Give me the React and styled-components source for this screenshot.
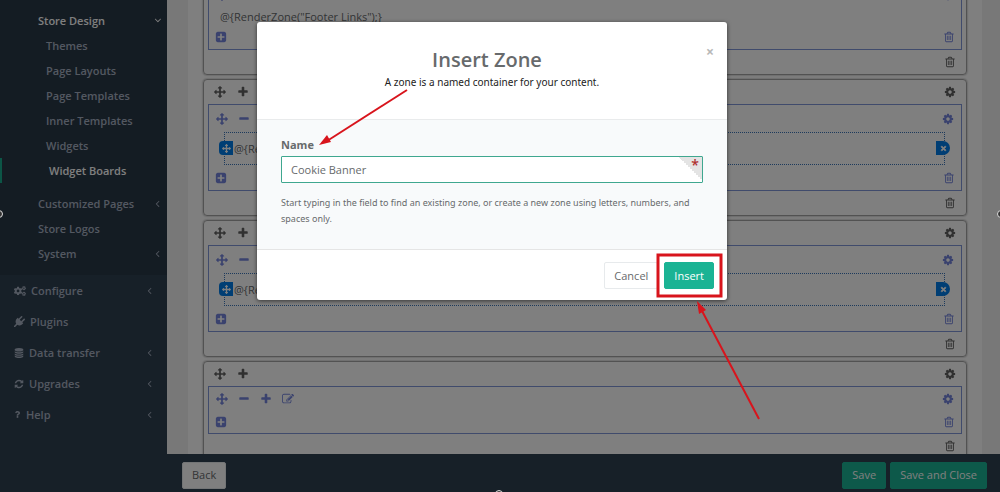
import React from 'react';
import styled, { createGlobalStyle, css } from 'styled-components';
import { FaCogs, FaQuestion, FaTimes } from 'react-icons/fa';

const GlobalStyle = createGlobalStyle`
  *, *::before, *::after {
    box-sizing: border-box;
  }

  body {
    margin: 0;
    background: #2f4050;
    font-family: 'Open Sans', 'Noto Sans', sans-serif;
    font-size: 11px;
    color: #676a6c;
  }

  button, input {
    font: inherit;
    margin: 0;
  }
`;

const Page = styled.div`
  position: relative;
  display: grid;
  grid-template-columns: 167px 1fr;
  grid-template-rows: minmax(0, 1fr) 38px;
  height: 100vh;
  overflow: hidden;
`;

/* ---------- sidebar ---------- */

const Sidebar = styled.nav`
  grid-row: 1 / 3;
  background: #2f4050;
  overflow: hidden;
`;

const MenuList = styled.ul`
  list-style: none;
  margin: 0;
  padding: 0;
`;

const OpenSection = styled(MenuList)`
  background: #293846;
  padding: 8px 0 9px;
`;

const SubList = styled(MenuList)`
  padding-bottom: 8px;
`;

const MenuLink = styled.a`
  display: flex;
  align-items: center;
  height: ${p => (p.$top ? 31 : 25)}px;
  padding: 0 ${p => (p.$top ? 12 : 4)}px 0 ${p => p.$indent}px;
  gap: 5px;
  color: ${p => (p.$active ? '#ffffff' : '#a7b1c2')};
  font-weight: 600;
  text-decoration: none;
  white-space: nowrap;
  ${p => p.$current && css`
    border-left: 2px solid #19aa8d;
  `}

  svg:last-child:not(:first-child) {
    margin-left: auto;
  }
`;

/* ---------- board ---------- */

const Main = styled.main`
  background: #f0f0f1;
  padding: 0 18px 0 21px;
  overflow: hidden;
`;

const Pane = styled.div`
  display: flex;
  flex-direction: column;
  gap: 4px;
  min-height: 100%;
  margin-top: -45px;
  padding: 0 15px;
  background: #ffffff;
`;

const Panel = styled.section`
  border: 1px solid #a4a4a4;
  border-radius: 4px;
  padding: 0 4px;
  box-shadow: 0 0 2px #888888;
`;

const Bar = styled.div`
  display: flex;
  align-items: center;
  height: ${p => p.$height}px;
  gap: ${p => p.$gap || 10}px;
  padding: 0 ${p => p.$pad}px;
`;

const Spacer = styled.span`
  flex: 1;
`;

const WidgetBox = styled.div`
  border: 1px solid #8096d8;
`;

const IconButton = styled.button`
  display: flex;
  border: 0;
  padding: 0;
  background: none;
  color: ${p => (p.$blue ? '#7484dc' : '#606060')};
  cursor: pointer;
`;

const ZoneText = styled.div`
  height: 16px;
  padding-left: 11px;
  line-height: 18px;
`;

const Zone = styled.div`
  position: relative;
  display: flex;
  align-items: center;
  height: 33px;
  margin: 0 16px 0 15px;
  padding-left: 9px;
  border: 1px dotted #3a74b8;
`;

const ZoneHandle = styled.button`
  position: absolute;
  top: 8px;
  ${p => (p.$side === 'left' ? 'left: -6px;' : 'right: -6px;')}
  display: flex;
  align-items: center;
  justify-content: center;
  width: 14px;
  height: 14px;
  padding: 0;
  border: 0;
  border-radius: ${p => (p.$side === 'left' ? '4px 0 0 4px' : '0 7px 7px 0')};
  background: #007ce8;
  color: #ffffff;
`;

const ActionBar = styled.footer`
  display: flex;
  align-items: center;
  gap: 4px;
  padding: 5px 13px 1px 15px;
  background: #2f4050;
`;

const Button = styled.button`
  height: 27px;
  padding: 0 9px;
  border: 1px solid ${p => (p.$primary ? '#1ab394' : '#e7eaec')};
  border-radius: 2px;
  background: ${p => (p.$primary ? '#1ab394' : '#ffffff')};
  color: ${p => (p.$primary ? '#ffffff' : '#676a6c')};
  line-height: 16px;
  cursor: pointer;
`;

/* ---------- dialog ---------- */

const Backdrop = styled.div`
  position: absolute;
  inset: 0;
  display: flex;
  align-items: flex-start;
  justify-content: center;
  padding: 22px 16px 0 0;
  background: rgba(0, 0, 0, 0.5);
`;

const Dialog = styled.div`
  position: relative;
  width: 470px;
  max-width: 100%;
  border-radius: 3px;
  background: #ffffff;
  box-shadow: 0 1px 4px rgba(0, 0, 0, 0.6);
`;

const DialogHeader = styled.header`
  padding: 25px 24px 28px;
  border-bottom: 1px solid #e9ebec;
  text-align: center;
`;

const Title = styled.h1`
  margin: 0;
  padding-right: 10px;
  font-size: 20px;
  line-height: 26px;
  font-weight: 600;
`;

const Subtitle = styled.p`
  margin: 0;
  color: #222222;
  font-family: 'Noto Sans', sans-serif;
  font-size: 10px;
  line-height: 18px;
`;

const CloseButton = styled.button`
  position: absolute;
  top: 22px;
  right: 13px;
  padding: 0;
  border: 0;
  background: none;
  color: #b8b8b8;
  font-size: 14px;
  font-weight: 700;
  line-height: 16px;
`;

const DialogBody = styled.div`
  padding: 16px 24px 22px;
  background: #f8fafb;
`;

const Label = styled.label`
  display: block;
  margin-bottom: 2px;
  font-weight: 700;
  line-height: 18px;
`;

const Field = styled.div`
  position: relative;
`;

const Input = styled.input`
  display: block;
  width: 100%;
  height: 27px;
  padding: 0 30px 0 9px;
  border: 1px solid #3fa78f;
  border-radius: 1px;
  outline: 0;
  background: #ffffff;
  color: #676a6c;
`;

const Required = styled.span`
  position: absolute;
  top: 1px;
  right: 1px;
  width: 23px;
  height: 23px;
  padding-right: 3px;
  background: linear-gradient(to top right, transparent 50%, #e4e4e4 50%);
  color: #b03030;
  font-size: 14px;
  font-weight: 600;
  line-height: 16px;
  text-align: right;
`;

const Help = styled.p`
  margin: 12px 0 0;
  font-family: 'Noto Sans', sans-serif;
  font-size: 9px;
  line-height: 16px;
`;

const DialogFooter = styled.footer`
  display: flex;
  justify-content: flex-end;
  gap: 6px;
  padding: 12px 13px 11px;
  border-top: 1px solid #e5e5e5;
`;

const Annotations = styled.svg`
  position: absolute;
  top: 0;
  left: 0;
  overflow: visible;
  pointer-events: none;
`;

const Grip = styled.span`
  position: absolute;
  width: 8px;
  height: 8px;
  border: 1px solid #dddddd;
  border-radius: 50%;
  background: #333333;
  ${p => p.$at === 'left' && 'left: -5px; top: 210px;'}
  ${p => p.$at === 'right' && 'right: -5px; top: 210px;'}
  ${p => p.$at === 'bottom' && 'left: calc(50% - 5px); bottom: -6px;'}
`;

/* ---------- icons ---------- */

const paths = {
  move: 'M1792 896q0 26-19 45l-256 256q-19 19-45 19t-45-19-19-45v-128h-384v384h128q26 0 45 19t19 45-19 45l-256 256q-19 19-45 19t-45-19l-256-256q-19-19-19-45t19-45 45-19h128v-384h-384v128q0 26-19 45t-45 19-45-19l-256-256q-19-19-19-45t19-45l256-256q19-19 45-19t45 19 19 45v128h384v-384h-128q-26 0-45-19t-19-45 19-45l256-256q19-19 45-19t45 19l256 256q19 19 19 45t-19 45-45 19h-128v384h384v-128q0-26 19-45t45-19 45 19l256 256q19 19 19 45z',
  plus: 'M1600 736v192q0 40-28 68t-68 28h-416v416q0 40-28 68t-68 28h-192q-40 0-68-28t-28-68v-416h-416q-40 0-68-28t-28-68v-192q0-40 28-68t68-28h416v-416q0-40 28-68t68-28h192q40 0 68 28t28 68v416h416q40 0 68 28t28 68z',
  minus: 'M1600 736v192q0 40-28 68t-68 28h-1216q-40 0-68-28t-28-68v-192q0-40 28-68t68-28h1216q40 0 68 28t28 68z',
  plusSquare: 'M1408 960v-128q0-26-19-45t-45-19h-320v-320q0-26-19-45t-45-19h-128q-26 0-45 19t-19 45v320h-320q-26 0-45 19t-19 45v128q0 26 19 45t45 19h320v320q0 26 19 45t45 19h128q26 0 45-19t19-45v-320h320q26 0 45-19t19-45zm256-544v960q0 119-84.5 203.5t-203.5 84.5h-960q-119 0-203.5-84.5t-84.5-203.5v-960q0-119 84.5-203.5t203.5-84.5h960q119 0 203.5 84.5t84.5 203.5z',
  trash: 'M704 736v576q0 14-9 23t-23 9h-64q-14 0-23-9t-9-23v-576q0-14 9-23t23-9h64q14 0 23 9t9 23zm256 0v576q0 14-9 23t-23 9h-64q-14 0-23-9t-9-23v-576q0-14 9-23t23-9h64q14 0 23 9t9 23zm256 0v576q0 14-9 23t-23 9h-64q-14 0-23-9t-9-23v-576q0-14 9-23t23-9h64q14 0 23 9t9 23zm128 724v-948h-896v948q0 22 7 40.5t14.5 27 10.5 8.5h832q3 0 10.5-8.5t14.5-27 7-40.5zm-672-1076h448l-48-117q-7-9-17-11h-317q-10 2-17 11zm928 32v64q0 14-9 23t-23 9h-96v948q0 83-47 143.5t-113 60.5h-832q-66 0-113-58.5t-47-141.5v-952h-96q-14 0-23-9t-9-23v-64q0-14 9-23t23-9h309l70-167q15-37 54-63t79-26h320q40 0 79 26t54 63l70 167h309q14 0 23 9t9 23z',
  cog: 'M1152 896q0-106-75-181t-181-75-181 75-75 181 75 181 181 75 181-75 75-181zm512-109v222q0 12-8 23t-20 13l-185 28q-19 54-39 91 35 50 107 138 10 12 10 25t-9 23q-27 37-99 108t-94 71q-12 0-26-9l-138-108q-44 23-91 38-16 136-29 186-7 28-36 28h-222q-14 0-24.5-8.5t-11.5-21.5l-28-184q-49-16-90-37l-141 107q-10 9-25 9-14 0-25-11-126-114-165-168-7-10-7-23 0-12 8-23 15-21 51-66.5t54-70.5q-27-50-41-99l-183-27q-13-2-21-12.5t-8-23.5v-222q0-12 8-23t19-13l186-28q14-46 39-92-40-57-107-138-10-12-10-24 0-10 9-23 26-36 98.5-107.5t94.5-71.5q13 0 26 10l138 107q44-23 91-38 16-136 29-186 7-28 36-28h222q14 0 24.5 8.5t11.5 21.5l28 184q49 16 90 37l142-107q9-9 24-9 13 0 25 10 129 119 165 170 7 8 7 22 0 12-8 23-15 21-51 66.5t-54 70.5q26 50 41 98l183 28q13 2 21 12.5t8 23.5z',
  edit: 'M888 1184l116-116-152-152-116 116v56h96v96h56zm440-720q-16-16-33 1l-350 350q-17 17-1 33t33-1l350-350q17-17 1-33zm80 594v190q0 119-84.5 203.5t-203.5 84.5h-832q-119 0-203.5-84.5t-84.5-203.5v-832q0-119 84.5-203.5t203.5-84.5h832q63 0 117 25 15 7 18 23 3 17-9 29l-49 49q-14 14-32 8-23-6-45-6h-832q-66 0-113 47t-47 113v832q0 66 47 113t113 47h832q66 0 113-47t47-113v-126q0-13 9-22l64-64q15-15 35-7t20 29zm-96-738l288 288-672 672h-288v-288zm444 132l-92 92-288-288 92-92q28-28 68-28t68 28l152 152q28 28 28 68t-28 68z',
  refresh: 'M1639 1056q0 5-1 7-64 268-268 434.5t-478 166.5q-146 0-282.5-55t-243.5-157l-129 129q-19 19-45 19t-45-19-19-45v-448q0-26 19-45t45-19h448q26 0 45 19t19 45-19 45l-137 137q71 66 161 102t187 36q134 0 250-65t186-179q11-17 53-117 8-23 30-23h192q13 0 22.5 9.5t9.5 22.5zm25-800v448q0 26-19 45t-45 19h-448q-26 0-45-19t-19-45 19-45l138-138q-148-137-349-137-134 0-250 65t-186 179q-11 17-53 117-8 23-30 23h-199q-13 0-22.5-9.5t-9.5-22.5v-7q65-268 270-434.5t480-166.5q146 0 284 55.5t245 156.5l130-129q19-19 45-19t45 19 19 45z',
  database: 'M896 768q237 0 443-43t325-127v170q0 69-103 128t-280 93.5-385 34.5-385-34.5-280-93.5-103-128v-170q119 84 325 127t443 43zm0 768q237 0 443-43t325-127v170q0 69-103 128t-280 93.5-385 34.5-385-34.5-280-93.5-103-128v-170q119 84 325 127t443 43zm0-384q237 0 443-43t325-127v170q0 69-103 128t-280 93.5-385 34.5-385-34.5-280-93.5-103-128v-170q119 84 325 127t443 43zm0-1152q208 0 385 34.5t280 93.5 103 128v128q0 69-103 128t-280 93.5-385 34.5-385-34.5-280-93.5-103-128v-128q0-69 103-128t280-93.5 385-34.5z',
  plug: 'M1755 453q37 38 37 90.5t-37 90.5l-401 400 150 150-160 160q-163 163-389.5 186.5t-411.5-100.5l-362 362h-181v-181l362-362q-124-185-100.5-411.5t186.5-389.5l160-160 150 150 400-401q38-37 91-37t90 37 37 90.5-37 90.5l-400 401 234 234 401-400q38-37 91-37t90 37z',
  angle: 'M1203 544q0 13-10 23l-393 393 393 393q10 10 10 23t-10 23l-50 50q-10 10-23 10t-23-10l-466-466q-10-10-10-23t10-23l466-466q10-10 23-10t23 10l50 50q10 10 10 23z',
};

const Glyph = ({ name, size = 12, turn = 0 }) => (
  <svg width={size} height={size} viewBox="0 0 1792 1792" fill="currentColor" aria-hidden="true">
    <path d={paths[name]} transform={turn ? `rotate(${turn} 896 896)` : undefined} />
  </svg>
);

const Tool = ({ name, label, blue, size }) => (
  <IconButton type="button" aria-label={label} $blue={blue}>
    <Glyph name={name} size={size} />
  </IconButton>
);

const designLinks = ['Themes', 'Page Layouts', 'Page Templates', 'Inner Templates', 'Widgets'];

const topLinks = [
  { label: 'Configure', icon: <FaCogs size={12} />, more: true },
  { label: 'Plugins', icon: <Glyph name="plug" size={11} /> },
  { label: 'Data transfer', icon: <Glyph name="database" size={10} />, more: true },
  { label: 'Upgrades', icon: <Glyph name="refresh" size={10} />, more: true },
  { label: 'Help', icon: <FaQuestion size={7} />, more: true },
];

const WidgetPanel = ({ text, zone }) => {
  const empty = !text && !zone;

  return (
    <Panel>
      <Bar $height={24} $pad={6} $gap={11}>
        <Tool name="move" label="Move row" />
        <Tool name="plus" label="Add column" />
        <Spacer />
        <Tool name="cog" label="Row settings" />
      </Bar>
      <WidgetBox>
        <Bar $height={empty ? 24 : 27} $pad={7}>
          <Tool name="move" label="Move column" blue />
          <Tool name="minus" label="Narrow column" blue />
          <Tool name="plus" label="Widen column" blue />
          <Tool name="edit" label="Edit column" blue />
          <Spacer />
          <Tool name="cog" label="Column settings" blue />
        </Bar>
        {text && <ZoneText>{text}</ZoneText>}
        {zone && (
          <Zone>
            <ZoneHandle type="button" $side="left" aria-label="Move zone">
              <Glyph name="move" size={9} />
            </ZoneHandle>
            {zone}
            <ZoneHandle type="button" $side="right" aria-label="Remove zone">
              <FaTimes size={7} stroke="currentColor" strokeWidth="50" />
            </ZoneHandle>
          </Zone>
        )}
        <Bar $height={empty ? 22 : 25} $pad={6}>
          <Tool name="plusSquare" label="Add widget" blue />
          <Spacer />
          <Tool name="trash" label="Delete column" blue />
        </Bar>
      </WidgetBox>
      <Bar $height={24} $pad={6}>
        <Spacer />
        <Tool name="trash" label="Delete row" />
      </Bar>
    </Panel>
  );
};

const App = () => {
  const [name, setName] = React.useState('Cookie Banner');

  return (
    <>
      <GlobalStyle />
      <Page>
        <Sidebar>
          <OpenSection>
            <li>
              <MenuLink href="#store-design" $indent={38} $active>
                <span>Store Design</span>
                <Glyph name="angle" size={11} turn={-90} />
              </MenuLink>
              <SubList>
                {designLinks.map(label => (
                  <li key={label}>
                    <MenuLink href="#design" $indent={46}>{label}</MenuLink>
                  </li>
                ))}
                <li>
                  <MenuLink href="#widget-boards" $indent={47} $active $current>Widget Boards</MenuLink>
                </li>
              </SubList>
            </li>
            <li>
              <MenuLink href="#pages" $indent={38}>
                <span>Customized Pages</span>
                <Glyph name="angle" size={11} />
              </MenuLink>
            </li>
            <li>
              <MenuLink href="#logos" $indent={38}>Store Logos</MenuLink>
            </li>
            <li>
              <MenuLink href="#system" $indent={38}>
                <span>System</span>
                <Glyph name="angle" size={11} />
              </MenuLink>
            </li>
          </OpenSection>
          <MenuList>
            {topLinks.map(({ label, icon, more }) => (
              <li key={label}>
                <MenuLink href="#section" $indent={14} $top>
                  {icon}
                  <span>{label}</span>
                  {more && <Glyph name="angle" size={11} />}
                </MenuLink>
              </li>
            ))}
          </MenuList>
        </Sidebar>

        <Main>
          <Pane>
            <WidgetPanel text={'@{RenderZone("Footer Links");}'} />
            <WidgetPanel zone="@{Rend}" />
            <WidgetPanel zone="@{Rend}" />
            <WidgetPanel />
          </Pane>
        </Main>

        <ActionBar>
          <Button type="button">Back</Button>
          <Spacer />
          <Button type="button" $primary>Save</Button>
          <Button type="button" $primary>Save and Close</Button>
        </ActionBar>

        <Backdrop>
          <Dialog role="dialog" aria-labelledby="dialog-title">
            <DialogHeader>
              <Title id="dialog-title">Insert Zone</Title>
              <Subtitle>A zone is a named container for your content.</Subtitle>
              <CloseButton type="button" aria-label="Close">×</CloseButton>
            </DialogHeader>
            <DialogBody>
              <Label htmlFor="zone-name">Name</Label>
              <Field>
                <Input id="zone-name" value={name} onChange={e => setName(e.target.value)} />
                <Required>*</Required>
              </Field>
              <Help>
                Start typing in the field to find an existing zone, or create a new zone using
                letters, numbers, and spaces only.
              </Help>
            </DialogBody>
            <DialogFooter>
              <Button type="button">Cancel</Button>
              <Button type="button" $primary>Insert</Button>
            </DialogFooter>
            <Annotations width="470" height="278" aria-hidden="true">
              <g stroke="#d8141c" strokeWidth="2" fill="none">
                <path d="M150 68L70 119" />
                <path d="M502 397L444 287" />
                <rect x="401" y="233" width="63" height="41" strokeWidth="3" />
              </g>
              <path d="M62 123L70 113L74 120Z" fill="#d8141c" />
              <path d="M440 279L449 288L442 292Z" fill="#d8141c" />
            </Annotations>
          </Dialog>
        </Backdrop>
        <Grip $at="left" />
        <Grip $at="right" />
        <Grip $at="bottom" />
      </Page>
    </>
  );
};

export default App;
